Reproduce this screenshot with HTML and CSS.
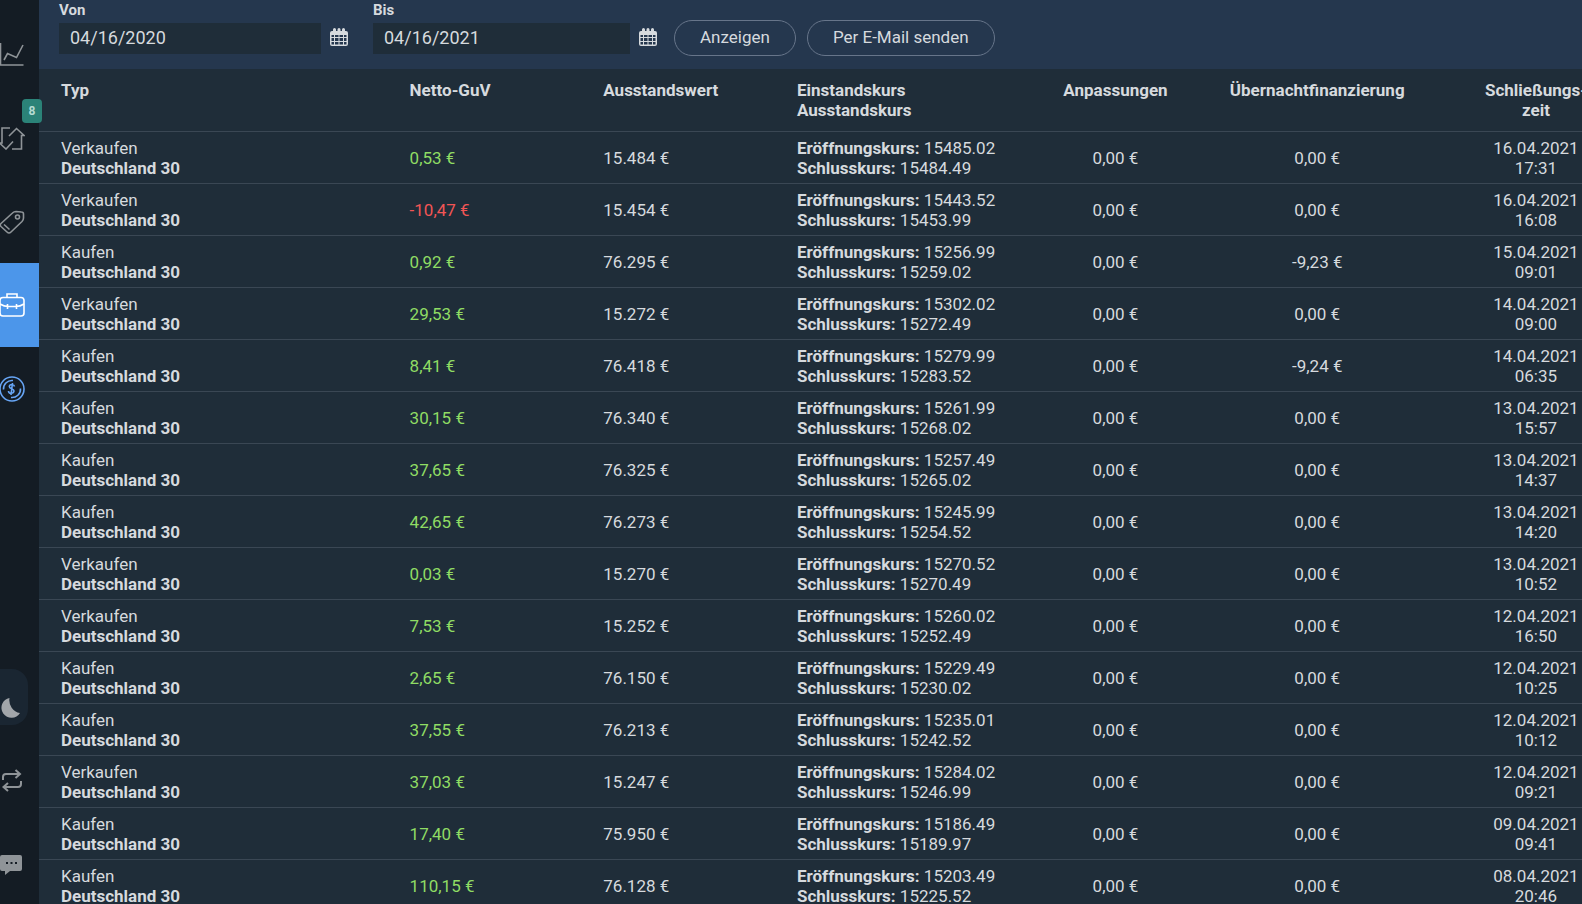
FILE: index.html
```html
<!DOCTYPE html>
<html lang="de">
<head>
  <meta charset="UTF-8" />
  <meta name="viewport" content="width=device-width, initial-scale=1.0" />
  <title>Kontohistorie</title>
  <link rel="stylesheet" href="styles.css">
</head>
<body>
  <nav class="sidebar">
    <a class="nav-item" href="#" aria-label="Charts">
      <svg class="icon" viewBox="0 0 26 26"><path d="M1.500 3v22h23M5 20l3.500-6.500 9 4L24 5"/></svg>
    </a>
    <a class="nav-item" href="#" aria-label="Positionen">
      <svg class="icon" viewBox="0 -2 26 26"><path d="M11 2H3v15H.5L7 23l7-7.500M13 23h9.500V9.500H25L17.500 2.500l-7.500 7.500"/></svg>
      <span class="badge">8</span>
    </a>
    <a class="nav-item" href="#" aria-label="Orders">
      <svg class="icon" viewBox="0 -2 26 26"><path d="M2 13.500 13.500 3Q15 1.500 17 1.500l5.500.5q2 0 2 2v4q0 2-1.500 3.500L12 22q-2 2-4 0L2 16.500q-1.500-1.500 0-3zM5 14.500l5.500 5"/><circle cx="18.500" cy="7" r="2"/></svg>
    </a>
    <a class="nav-item active" href="#" aria-label="Portfolio">
      <svg class="icon" viewBox="0 0 26 26"><rect x="1" y="5.500" width="24" height="18.500" rx="3"/><path d="M8 5.500V2h10v3.500M1 12q4 2.500 8 2.500h8q4 0 8-2.500M8.500 12v5M17.500 12v5"/></svg>
    </a>
    <a class="nav-item funds" href="#" aria-label="Guthaben">
      <svg class="icon" viewBox="0 0 26 26"><circle cx="13" cy="13" r="12"/><path d="M4.500 13.500A8.500 8.500 0 0 1 14 4.500M21.500 12.500A8.500 8.500 0 0 1 12 21.500"/><path d="M15.500 10.500q-.5-2-2.500-2-2.500 0-2.700 2c0 2.500 4.900 2 4.700 4.500-.2 2-2 2.300-3 2.300-2 0-2.500-1.300-2.500-2.300M13.500 7l-1.500 12"/></svg>
    </a>

    <div class="nav-bottom">
      <button class="theme-toggle" type="button" aria-label="Dunkelmodus">
        <svg class="moon" viewBox="0 0 20 22"><path d="M8.500 1A13 13 0 0 0 19 16 10 10 0 1 1 8.500 1z"/></svg>
      </button>
      <button class="nav-item small" type="button" aria-label="Konto wechseln">
        <svg class="icon thick-icon" viewBox="0 0 26 26"><path d="M4 13v-3q0-3 3-3h14M16.500 3l4.500 4-4.500 4M22 14v3q0 3-3 3H5M9 16l-4.500 4L9 24"/></svg>
      </button>
      <button class="nav-item small" type="button" aria-label="Chat">
        <svg class="icon chat" viewBox="0 0 26 26"><path d="M3 4h18q2 0 2 2v12q0 2-2 2H11l-5 4v-4H3q-2 0-2-2V6q0-2 2-2z"/><path class="dots" d="M7 12h2M11.500 12h2M16 12h2"/></svg>
      </button>
    </div>
  </nav>

  <main class="content">
    <form class="toolbar">
      <div class="field">
        <label for="from">Von</label>
        <div class="field-row">
          <input class="date-input" id="from" type="text" value="04/16/2020">
          <button class="calendar-btn" type="button" aria-label="Von wählen">
            <svg viewBox="0 0 18 18"><path fill-rule="evenodd" d="M2 3h1V1.500Q3 0 4.500 0T6 1.500V3h1.500V1.500Q7.500 0 9 0t1.500 1.500V3H12V1.500Q12 0 13.500 0T15 1.500V3h1q2 0 2 2v11q0 2-2 2H2q-2 0-2-2V5q0-2 2-2zm-.5 4v2H4V7zM5 7v2h3.500V7zm4.500 0v2H13V7zM14 7v2h2.500V7zM1.500 10v3H4v-3zM5 10v3h3.500v-3zm4.500 0v3H13v-3zm4.500 0v3h2.500v-3zM1.500 14v2.500H4V14zM5 14v2.500h3.500V14zm4.500 0v2.500H13V14zm4.500 0v2.500h2.500V14z"/></svg>
          </button>
        </div>
      </div>
      <div class="field">
        <label for="to">Bis</label>
        <div class="field-row">
          <input class="date-input" id="to" type="text" value="04/16/2021">
          <button class="calendar-btn" type="button" aria-label="Bis wählen">
            <svg viewBox="0 0 18 18"><path fill-rule="evenodd" d="M2 3h1V1.500Q3 0 4.500 0T6 1.500V3h1.500V1.500Q7.500 0 9 0t1.500 1.500V3H12V1.500Q12 0 13.500 0T15 1.500V3h1q2 0 2 2v11q0 2-2 2H2q-2 0-2-2V5q0-2 2-2zm-.5 4v2H4V7zM5 7v2h3.500V7zm4.500 0v2H13V7zM14 7v2h2.500V7zM1.500 10v3H4v-3zM5 10v3h3.500v-3zm4.500 0v3H13v-3zm4.500 0v3h2.500v-3zM1.500 14v2.500H4V14zM5 14v2.500h3.500V14zm4.500 0v2.500H13V14zm4.500 0v2.500h2.500V14z"/></svg>
          </button>
        </div>
      </div>
      <div class="actions">
        <button class="pill" type="button">Anzeigen</button>
        <button class="pill" type="button">Per E-Mail senden</button>
      </div>
    </form>

    <table class="history">
      <colgroup>
        <col class="c-type"><col class="c-pnl"><col class="c-value"><col class="c-rates"><col class="c-adjust"><col class="c-overnight"><col class="c-time">
      </colgroup>
      <thead>
        <tr>
          <th>Typ</th>
          <th>Netto-GuV</th>
          <th>Ausstandswert</th>
          <th>Einstandskurs<br>Ausstandskurs</th>
          <th class="center">Anpassungen</th>
          <th class="center">Übernachtfinanzierung</th>
          <th class="center">Schließungs-<br>zeit</th>
        </tr>
      </thead>
      <tbody>
        <tr><td>Verkaufen<br><b>Deutschland 30</b></td><td class="gain">0,53 €</td><td>15.484 €</td><td><b>Eröffnungskurs:</b> 15485.02<br><b>Schlusskurs:</b> 15484.49</td><td class="center">0,00 €</td><td class="center">0,00 €</td><td class="center">16.04.2021<br>17:31</td></tr>
        <tr><td>Verkaufen<br><b>Deutschland 30</b></td><td class="loss">-10,47 €</td><td>15.454 €</td><td><b>Eröffnungskurs:</b> 15443.52<br><b>Schlusskurs:</b> 15453.99</td><td class="center">0,00 €</td><td class="center">0,00 €</td><td class="center">16.04.2021<br>16:08</td></tr>
        <tr><td>Kaufen<br><b>Deutschland 30</b></td><td class="gain">0,92 €</td><td>76.295 €</td><td><b>Eröffnungskurs:</b> 15256.99<br><b>Schlusskurs:</b> 15259.02</td><td class="center">0,00 €</td><td class="center">-9,23 €</td><td class="center">15.04.2021<br>09:01</td></tr>
        <tr><td>Verkaufen<br><b>Deutschland 30</b></td><td class="gain">29,53 €</td><td>15.272 €</td><td><b>Eröffnungskurs:</b> 15302.02<br><b>Schlusskurs:</b> 15272.49</td><td class="center">0,00 €</td><td class="center">0,00 €</td><td class="center">14.04.2021<br>09:00</td></tr>
        <tr><td>Kaufen<br><b>Deutschland 30</b></td><td class="gain">8,41 €</td><td>76.418 €</td><td><b>Eröffnungskurs:</b> 15279.99<br><b>Schlusskurs:</b> 15283.52</td><td class="center">0,00 €</td><td class="center">-9,24 €</td><td class="center">14.04.2021<br>06:35</td></tr>
        <tr><td>Kaufen<br><b>Deutschland 30</b></td><td class="gain">30,15 €</td><td>76.340 €</td><td><b>Eröffnungskurs:</b> 15261.99<br><b>Schlusskurs:</b> 15268.02</td><td class="center">0,00 €</td><td class="center">0,00 €</td><td class="center">13.04.2021<br>15:57</td></tr>
        <tr><td>Kaufen<br><b>Deutschland 30</b></td><td class="gain">37,65 €</td><td>76.325 €</td><td><b>Eröffnungskurs:</b> 15257.49<br><b>Schlusskurs:</b> 15265.02</td><td class="center">0,00 €</td><td class="center">0,00 €</td><td class="center">13.04.2021<br>14:37</td></tr>
        <tr><td>Kaufen<br><b>Deutschland 30</b></td><td class="gain">42,65 €</td><td>76.273 €</td><td><b>Eröffnungskurs:</b> 15245.99<br><b>Schlusskurs:</b> 15254.52</td><td class="center">0,00 €</td><td class="center">0,00 €</td><td class="center">13.04.2021<br>14:20</td></tr>
        <tr><td>Verkaufen<br><b>Deutschland 30</b></td><td class="gain">0,03 €</td><td>15.270 €</td><td><b>Eröffnungskurs:</b> 15270.52<br><b>Schlusskurs:</b> 15270.49</td><td class="center">0,00 €</td><td class="center">0,00 €</td><td class="center">13.04.2021<br>10:52</td></tr>
        <tr><td>Verkaufen<br><b>Deutschland 30</b></td><td class="gain">7,53 €</td><td>15.252 €</td><td><b>Eröffnungskurs:</b> 15260.02<br><b>Schlusskurs:</b> 15252.49</td><td class="center">0,00 €</td><td class="center">0,00 €</td><td class="center">12.04.2021<br>16:50</td></tr>
        <tr><td>Kaufen<br><b>Deutschland 30</b></td><td class="gain">2,65 €</td><td>76.150 €</td><td><b>Eröffnungskurs:</b> 15229.49<br><b>Schlusskurs:</b> 15230.02</td><td class="center">0,00 €</td><td class="center">0,00 €</td><td class="center">12.04.2021<br>10:25</td></tr>
        <tr><td>Kaufen<br><b>Deutschland 30</b></td><td class="gain">37,55 €</td><td>76.213 €</td><td><b>Eröffnungskurs:</b> 15235.01<br><b>Schlusskurs:</b> 15242.52</td><td class="center">0,00 €</td><td class="center">0,00 €</td><td class="center">12.04.2021<br>10:12</td></tr>
        <tr><td>Verkaufen<br><b>Deutschland 30</b></td><td class="gain">37,03 €</td><td>15.247 €</td><td><b>Eröffnungskurs:</b> 15284.02<br><b>Schlusskurs:</b> 15246.99</td><td class="center">0,00 €</td><td class="center">0,00 €</td><td class="center">12.04.2021<br>09:21</td></tr>
        <tr><td>Kaufen<br><b>Deutschland 30</b></td><td class="gain">17,40 €</td><td>75.950 €</td><td><b>Eröffnungskurs:</b> 15186.49<br><b>Schlusskurs:</b> 15189.97</td><td class="center">0,00 €</td><td class="center">0,00 €</td><td class="center">09.04.2021<br>09:41</td></tr>
        <tr><td>Kaufen<br><b>Deutschland 30</b></td><td class="gain">110,15 €</td><td>76.128 €</td><td><b>Eröffnungskurs:</b> 15203.49<br><b>Schlusskurs:</b> 15225.52</td><td class="center">0,00 €</td><td class="center">0,00 €</td><td class="center">08.04.2021<br>20:46</td></tr>
      </tbody>
    </table>
  </main>
</body>
</html>
```
FILE: styles.css
```css
* {
  box-sizing: border-box;
}
body {
  margin: 0;
  height: 100vh;
  display: flex;
  overflow: hidden;
  background: #1f2d39;
  color: #d6dade;
  font-family: Roboto, sans-serif;
  font-size: 17px;
  line-height: 20px;
}
button {
  border: none;
  background: none;
  color: inherit;
  font: inherit;
  cursor: pointer;
}

/* sidebar */
.sidebar {
  flex: 0 0 39px;
  min-width: 0;
  display: flex;
  flex-direction: column;
  padding-top: 11px;
  background: #141c24;
}
.nav-item {
  position: relative;
  width: 100%;
  height: 84px;
  display: flex;
  flex-shrink: 0;
  align-items: center;
  justify-content: flex-end;
  padding: 0 14px 0 0;
  color: #8f9498;
}
.nav-item.active {
  background: #4c96ea;
  color: #fff;
}
.nav-item.funds {
  color: #67a5f5;
}
.nav-item.small {
  height: 80px;
}
.icon {
  flex: none;
  width: 26px;
  height: 26px;
  fill: none;
  stroke: currentColor;
  stroke-width: 1.6;
}
.thick-icon {
  stroke-width: 2;
}
.chat {
  fill: currentColor;
  stroke: none;
}
.chat .dots {
  stroke: #141c24;
  stroke-width: 2;
}
.badge {
  position: absolute;
  top: 4px;
  right: -3px;
  z-index: 1;
  width: 20px;
  height: 24px;
  border-radius: 4px;
  background: #2b8378;
  color: #b5dcd3;
  font-size: 12px;
  font-weight: bold;
  line-height: 25px;
  text-align: center;
}
.nav-bottom {
  display: flex;
  flex-direction: column;
  gap: 4px;
  margin-top: auto;
}
.theme-toggle {
  width: 28px;
  height: 56px;
  margin-bottom: 11px;
  padding: 0 7px 6px 0;
  display: flex;
  align-items: flex-end;
  justify-content: flex-end;
  border-radius: 0 16px 16px 0;
  background: #1a2632;
}
.moon {
  flex: none;
  width: 20px;
  height: 22px;
  fill: #a2a6aa;
}

/* date filter */
.content {
  flex: 1;
  min-width: 0;
  overflow: hidden;
}
.toolbar {
  display: flex;
  height: 69px;
  padding-left: 20px;
  background: #25374e;
}
.field {
  width: 314px;
}
.field + .field {
  width: 301px;
}
.field label {
  display: block;
  height: 23px;
  font-size: 15px;
  font-weight: bold;
}
.field-row {
  display: flex;
  align-items: center;
  gap: 9px;
  padding-right: 25px;
}
.field + .field .field-row {
  padding-right: 17px;
}
.date-input {
  flex: 1;
  min-width: 0;
  height: 31px;
  padding: 0 11px 2px;
  border: none;
  background: #1f2d39;
  color: inherit;
  font: inherit;
  font-size: 18px;
}
.calendar-btn {
  display: flex;
  padding: 0 0 3px;
}
.calendar-btn svg {
  width: 18px;
  height: 18px;
  fill: #d6dade;
}
.actions {
  display: flex;
  align-items: flex-start;
  gap: 11px;
  padding-top: 20px;
}
.pill {
  height: 36px;
  padding: 0 25px 2px;
  border: 1px solid #67758a;
  border-radius: 18px;
}

/* history table, last column runs past the right edge */
.history {
  width: 104.6%;
  table-layout: fixed;
  border-collapse: separate;
  border-spacing: 0;
}
.c-type { width: 21.6%; }
.c-pnl { width: 12%; }
.c-value { width: 12%; }
.c-rates { width: 14.9%; }
.c-adjust { width: 12.4%; }
.c-overnight { width: 12.6%; }
.c-time { width: 14.5%; }
.history th,
.history td {
  padding: 6px 0 5px 22px;
  border-bottom: 1px solid #3a4754;
  text-align: left;
  white-space: nowrap;
}
.history th {
  padding-top: 11px;
  padding-bottom: 11px;
  vertical-align: top;
}
.history .center {
  padding-left: 0;
  text-align: center;
}
.history .gain {
  color: #8fdc64;
}
.history .loss {
  color: #f25555;
}
```
